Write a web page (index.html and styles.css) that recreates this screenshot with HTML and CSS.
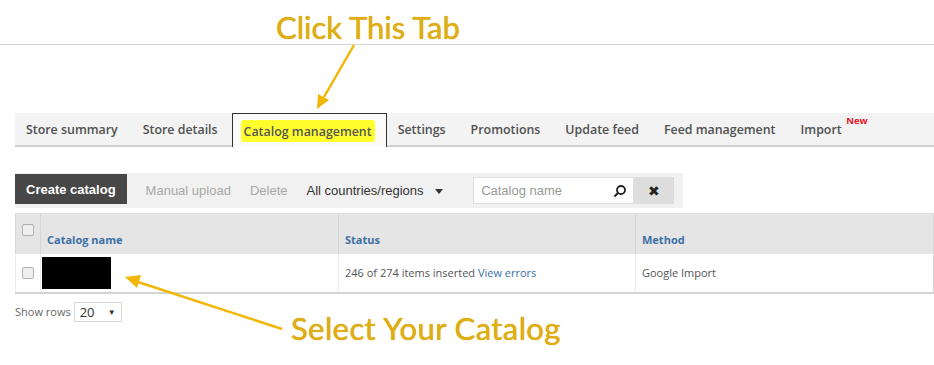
FILE: index.html
```html
<!DOCTYPE html>
<html lang="en">
<head>
  <meta charset="UTF-8">
  <title>Catalog management</title>
  <link rel="stylesheet" href="styles.css">
</head>
<body>

<div class="page">
  <div class="topbar"></div>

  <div class="content">
    <nav class="tabs">
      <span class="tab">Store summary</span>
      <span class="tab">Store details</span>
      <span class="tab active"><span class="mark">Catalog management</span></span>
      <span class="tab">Settings</span>
      <span class="tab">Promotions</span>
      <span class="tab">Update feed</span>
      <span class="tab">Feed management</span>
      <span class="tab">Import<sup class="new">New</sup></span>
    </nav>

    <div class="toolbar">
      <button class="btn-dark">Create catalog</button>
      <span class="tool off">Manual upload</span>
      <span class="tool off">Delete</span>
      <span class="tool">All countries/regions <span class="caret"></span></span>
      <div class="search">
        <span class="search-box">
          <span class="placeholder">Catalog name</span>
          <svg width="14" height="14" viewBox="0 0 14 14"><circle cx="8" cy="6" r="4" fill="none" stroke="#222" stroke-width="1.8"/><line x1="5.2" y1="8.8" x2="1.5" y2="12.5" stroke="#222" stroke-width="2"/></svg>
        </span>
        <span class="search-clear">&#x2716;</span>
      </div>
    </div>

    <table class="grid">
      <thead>
        <tr>
          <th class="col-check"><span class="check"></span></th>
          <th class="col-name">Catalog name</th>
          <th class="col-status">Status</th>
          <th>Method</th>
        </tr>
      </thead>
      <tbody>
        <tr>
          <td class="col-check"><span class="check"></span></td>
          <td class="col-name"><span class="redacted"></span></td>
          <td>246 of 274 items inserted <a href="#">View errors</a></td>
          <td>Google Import</td>
        </tr>
      </tbody>
    </table>

    <div class="pager">
      <span>Show rows</span>
      <span class="rows-select">20 <span class="small-caret">&#9660;</span></span>
    </div>
  </div>

  <div class="note note-top">Click This Tab</div>
  <div class="note note-bottom">Select Your Catalog</div>

  <svg class="arrows" width="934" height="365" viewBox="0 0 934 365">
    <line x1="354" y1="45" x2="324" y2="97" stroke="#f2b705" stroke-width="2.5"/>
    <polygon points="317,109 318,94 329,100" fill="#f2b705"/>
    <line x1="282" y1="329" x2="138" y2="282" stroke="#f2b705" stroke-width="2.5"/>
    <polygon points="125,277 141,275 137,288" fill="#f2b705"/>
  </svg>
</div>

</body>
</html>
```

FILE: styles.css
```css
body {
  margin: 0;
  font-family: 'Open Sans', 'Liberation Sans', sans-serif;
  background: white;
  color: #444;
}

.page {
  position: relative;
  width: 934px;
  height: 365px;
  overflow: hidden;
}

.topbar {
  height: 44px;
  border-bottom: 1px solid #d6d6d6;
}

.content {
  padding: 68px 0 0 15px;
}

/* tabs */
.tabs {
  display: flex;
  height: 32px;
  background: #f3f3f3;
  border-bottom: 2px solid #cfcfcf;
}

.tab {
  position: relative;
  display: flex;
  align-items: center;
  padding: 1px 14px 0 11px;
  font-size: 12.4px;
  font-weight: 600;
  color: #505050;
}

.tab.active {
  background: #fbfbfb;
  border: 1px solid #333;
  border-bottom: none;
  margin-bottom: -2px;
}

.mark {
  background: #ffff2e;
  padding: 3px 3px 2px;
  margin: 0 -3px;
  border-radius: 3px;
  color: #555;
}

.new {
  position: absolute;
  top: 1px;
  right: -12px;
  font-size: 9.5px;
  font-weight: 700;
  color: #e8141e;
}

/* toolbar */
.toolbar {
  display: flex;
  align-items: center;
  width: 668px;
  height: 35px;
  margin-top: 26px;
  background: #f1f1f1;
  font-family: 'Liberation Sans', Arial, sans-serif;
  font-size: 13px;
}

.btn-dark {
  height: 30px;
  padding: 0 11px;
  margin-bottom: 3px;
  background: #474747;
  color: white;
  border: none;
  font-family: inherit;
  font-size: 13px;
  font-weight: 600;
}

.tool {
  margin-left: 19px;
  color: #333;
}

.tool.off {
  color: #a8a8a8;
}

.caret {
  display: inline-block;
  margin-left: 8px;
  border-left: 4.5px solid transparent;
  border-right: 4.5px solid transparent;
  border-top: 5px solid #333;
  vertical-align: middle;
}

.search {
  display: flex;
  margin-left: 30px;
}

.search-box {
  display: flex;
  align-items: center;
  justify-content: space-between;
  width: 146px;
  height: 25px;
  padding: 0 6px 0 7px;
  background: white;
  border: 1px solid #e0e0e0;
}

.placeholder {
  color: #999;
}

.search-clear {
  display: flex;
  align-items: center;
  justify-content: center;
  width: 40px;
  height: 27px;
  background: #dddddd;
  font-size: 14px;
  color: #222;
}

/* table */
.grid {
  width: 919px;
  margin-top: 5px;
  border-collapse: collapse;
  font-size: 11px;
}

.grid thead tr {
  height: 40px;
}

.grid tbody tr {
  height: 39px;
}

.grid th {
  padding: 0 6px 7px;
  background: #e5e5e5;
  color: #3b6fa6;
  font-weight: 700;
  text-align: left;
  vertical-align: bottom;
  border-left: 1px solid #d6d6d6;
  border-top: 1px solid #e0e0e0;
}

.grid td {
  padding: 0 6px;
  color: #555;
  border-left: 1px solid #ececec;
  border-bottom: 2px solid #d4d4d4;
}

.grid tr > :last-child {
  border-right: 1px solid #d6d6d6;
}

.grid .col-check {
  width: 12px;
  padding: 0 6px;
}

.grid th.col-check {
  vertical-align: top;
  padding-top: 10px;
}

.col-name {
  width: 285px;
}

.col-status {
  width: 284px;
}

.check {
  display: block;
  width: 10px;
  height: 10px;
  border: 1px solid #b0b0b0;
  border-radius: 2px;
  background: #efefef;
}

.grid td.col-name {
  padding: 0 0 0 1px;
}

.redacted {
  display: block;
  width: 69px;
  height: 32px;
  background: black;
}

.grid a {
  color: #3b6fa6;
  text-decoration: none;
}

/* pager */
.pager {
  display: flex;
  align-items: center;
  gap: 3px;
  margin-top: 8px;
  font-size: 11px;
  color: #666;
}

.rows-select {
  display: flex;
  align-items: center;
  justify-content: space-between;
  width: 36px;
  height: 18px;
  padding: 0 5px;
  border: 1px solid #d8d8d8;
  font-size: 13px;
  color: #333;
}

.small-caret {
  font-size: 8px;
}

/* annotations */
.note {
  position: absolute;
  font-family: Lato, 'Open Sans', sans-serif;
  font-size: 31px;
  color: #e0ae10;
  text-shadow: 0 0 1px #c8960c;
}

.note-top {
  left: 276px;
  top: 8px;
}

.note-bottom {
  left: 291px;
  top: 309px;
  letter-spacing: 0.4px;
}

.arrows {
  position: absolute;
  left: 0;
  top: 0;
}
```
